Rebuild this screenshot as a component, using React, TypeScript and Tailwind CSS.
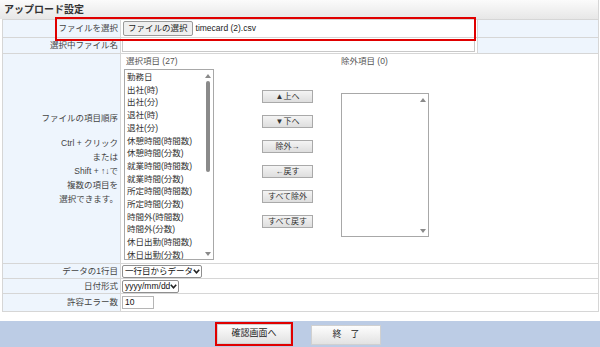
import React from 'react';

const font = { fontFamily: '"Liberation Sans", "Noto Sans CJK JP", sans-serif' };

const selectedItems = [
  '勤務日',
  '出社(時)',
  '出社(分)',
  '退社(時)',
  '退社(分)',
  '休憩時間(時間数)',
  '休憩時間(分数)',
  '就業時間(時間数)',
  '就業時間(分数)',
  '所定時間(時間数)',
  '所定時間(分数)',
  '時間外(時間数)',
  '時間外(分数)',
  '休日出勤(時間数)',
  '休日出勤(分数)',
];

const moveButtons = ['▲上へ', '▼下へ', '除外→', '←戻す', 'すべて除外', 'すべて戻す'];

function Arrow({ up }: { up?: boolean }) {
  return (
    <svg width="6" height="4" viewBox="0 0 6 4" className="block">
      <path d={up ? 'M0 4 L3 0 L6 4 Z' : 'M0 0 L3 4 L6 0 Z'} fill="#8a8a8a" />
    </svg>
  );
}

function Chevron() {
  return (
    <svg width="7" height="5" viewBox="0 0 7 5" className="block shrink-0">
      <path d="M0.8 0.8 L3.5 3.8 L6.2 0.8" fill="none" stroke="#222" strokeWidth="1.6" />
    </svg>
  );
}

function Label({ children }: { children: React.ReactNode }) {
  return (
    <div className="w-[118px] shrink-0 border-r border-[#d6d6d6] bg-[#eef5fd] flex items-center justify-end pr-[2px] text-[#444]">
      {children}
    </div>
  );
}

export default function App() {
  return (
    <div style={font} className="relative w-[600px] h-[347px] bg-white overflow-hidden text-[8.5px] text-[#333]">
      {/* heading */}
      <div className="h-[19px] w-[599px] border-r border-[#d6d6d6] bg-gradient-to-b from-[#fbfbfb] to-[#e7e7e7] flex items-center pl-[4px] text-[10px] font-bold text-[#333]">
        アップロード設定
      </div>

      {/* settings table */}
      <div className="ml-[2px] w-[597px] border border-[#d6d6d6]">
        <div className="flex h-[18px] border-b border-[#d6d6d6]">
          <Label>ファイルを選択</Label>
          <div className="w-[357px] border-r border-[#d6d6d6] flex items-center pl-[2px] gap-[3px]">
            <div className="h-[15px] px-[4px] flex items-center border border-[#9a9a9a] rounded-[2px] bg-[#efefef] text-[#222]">
              ファイルの選択
            </div>
            <span className="text-[#222]">timecard (2).csv</span>
          </div>
          <div className="flex-1 bg-[#eef5fd]" />
        </div>

        <div className="flex h-[16px] border-b border-[#d6d6d6]">
          <Label>選択中ファイル名</Label>
          <div className="w-[357px] border-r border-[#d6d6d6] flex items-center pl-[1px]">
            <div className="w-[353px] h-[12px] border border-[#c8c8c8] bg-white" />
          </div>
          <div className="flex-1 bg-[#eef5fd]" />
        </div>

        <div className="flex h-[210px] border-b border-[#d6d6d6]">
          <Label>
            <div className="text-right leading-[14px]">
              <div>ファイルの項目順序</div>
              <div className="mt-[11px]">Ctrl + クリック</div>
              <div>または</div>
              <div>Shift + ↑↓で</div>
              <div>複数の項目を</div>
              <div>選択できます。</div>
            </div>
          </Label>
          <div className="flex-1 flex pl-[3px]">
            <div className="flex flex-col w-[90px]">
              <div className="h-[14px] pl-[2px] flex items-end text-[#555]">選択項目 (27)</div>
              <div className="mt-[1px] h-[191px] border border-[#a8a8a8] flex">
                <div className="flex-1 pl-[2px] pt-[1px] leading-[12.7px] text-[#333] whitespace-nowrap overflow-hidden">
                  {selectedItems.map((item) => (
                    <div key={item}>{item}</div>
                  ))}
                </div>
                <div className="w-[10px] flex flex-col items-center pt-[4px] pb-[3px]">
                  <Arrow up />
                  <div className="mt-[3px] w-[4px] h-[91px] rounded-full bg-[#8a8a8a]" />
                  <div className="flex-1" />
                  <Arrow />
                </div>
              </div>
            </div>

            <div className="ml-[48px] pt-[36px] flex flex-col gap-[12px]">
              {moveButtons.map((b) => (
                <div
                  key={b}
                  className="w-[51px] h-[13px] flex items-center justify-center border border-[#a9a9a9] bg-gradient-to-b from-[#f4f4f4] to-[#dedede] text-[8px] text-[#333]"
                >
                  {b}
                </div>
              ))}
            </div>

            <div className="ml-[28px] flex flex-col">
              <div className="h-[14px] flex items-end text-[#555]">除外項目 (0)</div>
              <div className="mt-[25px] w-[88px] h-[144px] border border-[#a8a8a8] flex justify-end">
                <div className="w-[10px] flex flex-col items-center pt-[4px] pb-[3px]">
                  <Arrow up />
                  <div className="flex-1" />
                  <Arrow />
                </div>
              </div>
            </div>
          </div>
        </div>

        <div className="flex h-[15px] border-b border-[#d6d6d6]">
          <Label>データの1行目</Label>
          <div className="flex-1 flex items-center pl-[1px]">
            <div className="w-[80px] h-[13px] border border-[#8f8f8f] rounded-[2px] flex items-center justify-between pl-[2px] pr-[1px] text-[#111] whitespace-nowrap">
              <span>一行目からデータ</span>
              <Chevron />
            </div>
          </div>
        </div>

        <div className="flex h-[15px] border-b border-[#d6d6d6]">
          <Label>日付形式</Label>
          <div className="flex-1 flex items-center pl-[1px]">
            <div className="w-[57px] h-[13px] border border-[#8f8f8f] rounded-[2px] flex items-center justify-between pl-[2px] pr-[1px] text-[#111] whitespace-nowrap">
              <span>yyyy/mm/dd</span>
              <Chevron />
            </div>
          </div>
        </div>

        <div className="flex h-[17px]">
          <Label>許容エラー数</Label>
          <div className="flex-1 flex items-center pl-[1px]">
            <div className="w-[32px] h-[13px] border border-[#b5b5b5] flex items-center pl-[2px] text-[#111]">10</div>
          </div>
        </div>
      </div>

      {/* footer buttons */}
      <div className="mt-[9px] h-[27px] bg-[#bccce5] flex items-center justify-center gap-[18px]">
        <div className="border-2 border-[#e00000] ml-[-4px] mt-[-2px]">
          <div className="w-[74px] h-[20px] flex items-center justify-center bg-gradient-to-b from-[#fdfdfd] to-[#e2e2e2] border border-[#d0d0d0] text-[9px] text-[#222]">
            確認画面へ
          </div>
        </div>
        <div className="w-[70px] h-[20px] flex items-center justify-center bg-gradient-to-b from-[#fdfdfd] to-[#e2e2e2] border border-[#d0d0d0] text-[9px] text-[#222]">
          終　了
        </div>
      </div>

      {/* highlight annotation */}
      <div className="absolute left-[55px] top-[17px] w-[421px] h-[24px] border-2 border-[#e00000] pointer-events-none" />
    </div>
  );
}
